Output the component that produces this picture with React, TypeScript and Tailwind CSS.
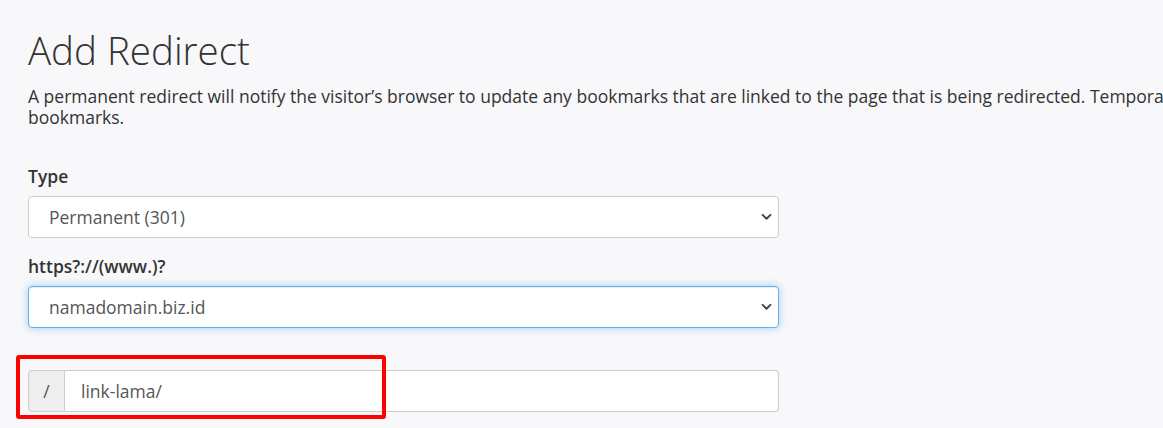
import React from "react";

function Chevron() {
  return (
    <svg width="11" height="7" viewBox="0 0 12 8" className="absolute right-[6px] top-1/2 -translate-y-1/2" fill="none">
      <path d="M1.5 1.5 L6 6 L10.5 1.5" stroke="#444" strokeWidth="2.2" strokeLinecap="round" strokeLinejoin="round" />
    </svg>
  );
}

export default function App() {
  return (
    <div
      className="relative w-full h-[428px] overflow-hidden bg-[#f8f8fa] text-[#333]"
      style={{ fontFamily: '"Open Sans", "Noto Sans", sans-serif' }}
    >
      <div className="pl-[28px] pt-[28px]">
        <h1 className="text-[38.5px] leading-[44px] font-light text-[#333] whitespace-nowrap">Add Redirect</h1>
        <p className="mt-[14px] text-[17.5px] leading-[21px] text-[#333] whitespace-nowrap">
          A permanent redirect will notify the visitor’s browser to update any bookmarks that are linked to the page that is being redirected. Temporary redirects will not update the visitor’s
          <br />
          bookmarks.
        </p>

        <div className="w-[751px]">
          <div className="mt-[38px] text-[17.5px] leading-[21px] font-semibold text-[#333]">Type</div>
          <div className="relative mt-[9px] h-[42px] rounded-[4px] border border-[#ccc] bg-white flex items-center pl-[20px]">
            <span className="text-[17.5px] leading-[21px] text-[#555]">Permanent (301)</span>
            <Chevron />
          </div>

          <div className="mt-[18px] text-[17.5px] leading-[21px] font-semibold text-[#333]">https?://(www.)?</div>
          <div className="relative mt-[9px] h-[42px] rounded-[4px] border border-[#66afe9] bg-white flex items-center pl-[20px] shadow-[inset_0_1px_1px_rgba(0,0,0,0.075),0_0_8px_rgba(102,175,233,0.6)]">
            <span className="text-[17.5px] leading-[21px] text-[#555]">namadomain.biz.id</span>
            <Chevron />
          </div>

          <div className="mt-[42px] h-[42px] flex">
            <div className="w-[37px] h-full flex items-center justify-center rounded-l-[4px] border border-[#ccc] bg-[#eee] text-[17.5px] text-[#555]">
              /
            </div>
            <div className="flex-1 h-full flex items-center pl-[16px] rounded-r-[4px] border border-l-0 border-[#ccc] bg-white text-[17.5px] text-[#555]">
              link-lama/
            </div>
          </div>
        </div>
      </div>

      <div className="absolute left-[16px] top-[355px] w-[370px] h-[64px] border-[4px] border-[#ff0000] rounded-[3px] pointer-events-none" />
    </div>
  );
}
